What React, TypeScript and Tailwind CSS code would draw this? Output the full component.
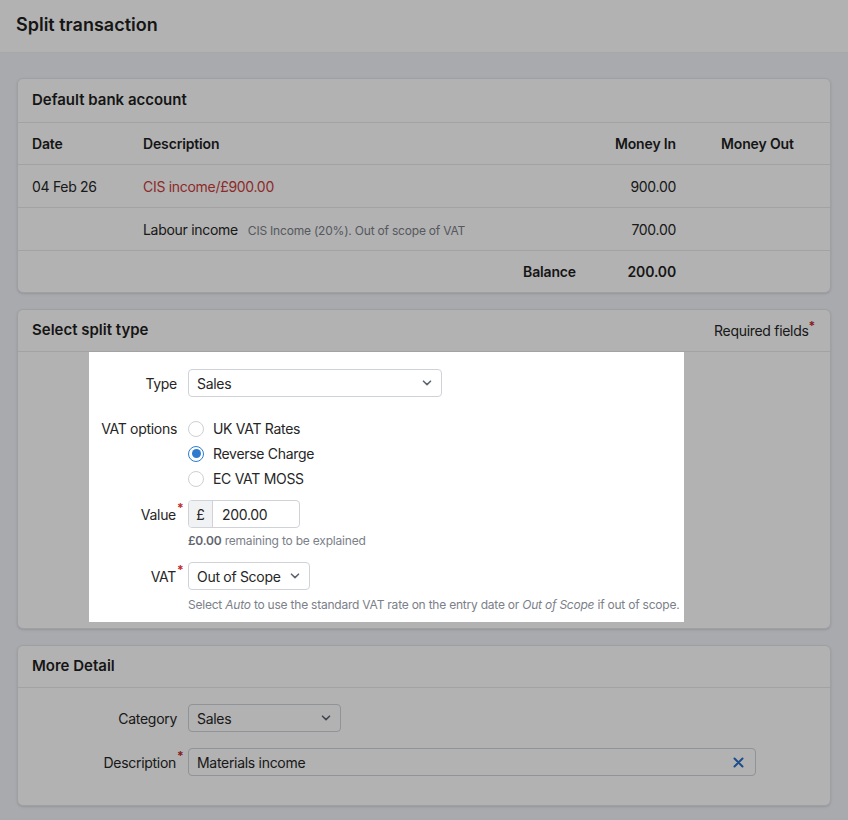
import React from "react";

const font = { fontFamily: "Inter, 'Noto Sans', 'Liberation Sans', sans-serif" };

function Chevron() {
  return (
    <svg width="10" height="6" viewBox="0 0 10 6" className="shrink-0">
      <path d="M1.5 1.2 L5 4.6 L8.5 1.2" fill="none" stroke="#5f6673" strokeWidth="1.6" strokeLinecap="round" strokeLinejoin="round" />
    </svg>
  );
}

function Select({ value, width }: { value: string; width: string }) {
  return (
    <div className={`flex h-[28px] items-center justify-between rounded-[4px] border border-[#cfd3d9] bg-white pl-[8px] pr-[9px] text-[14px] tracking-[-0.3px] text-[#262626] ${width}`}>
      <span>{value}</span>
      <Chevron />
    </div>
  );
}

function Radio({ label, checked }: { label: string; checked?: boolean }) {
  return (
    <div className="flex h-[25px] items-center gap-[9px]">
      {checked ? (
        <span className="flex h-[16px] w-[16px] items-center justify-center rounded-full border border-[#2f7bd0] bg-white">
          <span className="h-[9px] w-[9px] rounded-full bg-[#2f7bd0]" />
        </span>
      ) : (
        <span className="h-[16px] w-[16px] rounded-full border border-[#cdd0d5] bg-white" />
      )}
      <span className="text-[14px] tracking-[-0.3px] text-[#262626]">{label}</span>
    </div>
  );
}

function Label({ text, required }: { text: string; required?: boolean }) {
  return (
    <span className="relative text-[14px] tracking-[-0.3px] text-[#262626]">
      {text}
      {required && (
        <span className="absolute left-full top-[-5px] pl-[1px] text-[12px] font-bold text-[#c0282d]">*</span>
      )}
    </span>
  );
}

function CardHeader({ title, right }: { title: string; right?: React.ReactNode }) {
  return (
    <div className="flex h-[42px] items-center justify-between border-b border-[#e8e9ec] pl-[14px] pr-[15px]">
      <h2 className="text-[15px] font-semibold text-[#1f1f1f]">{title}</h2>
      {right}
    </div>
  );
}

export default function App() {
  return (
    <div className="relative min-h-screen bg-[#f2f4fa] text-[#262626]" style={font}>
      {/* Page header */}
      <div className="flex h-[53px] items-center border-b border-[#f0f0f0] bg-white pb-[4px] pl-[16px]">
        <h1 className="text-[18px] font-semibold text-[#1f1f1f]">Split transaction</h1>
      </div>

      <div className="flex flex-col gap-[16px] px-[17px] pb-[16px] pt-[25px]">
        {/* Bank account table */}
        <section className="overflow-hidden rounded-[6px] border border-[#e4e6ea] bg-white shadow-sm">
          <div className="flex h-[44px] items-center border-b border-[#e8e9ec] px-[14px]">
            <h2 className="text-[15px] font-semibold text-[#1f1f1f]">Default bank account</h2>
          </div>
          <div className="flex h-[42px] items-center border-b border-[#e8e9ec] pl-[14px] text-[14px] font-semibold tracking-[-0.15px] text-[#1f1f1f]">
            <div className="w-[111px]">Date</div>
            <div className="flex-1">Description</div>
            <div className="w-[100px] text-right">Money In</div>
            <div className="w-[154px] pl-[45px]">Money Out</div>
          </div>
          <div className="flex h-[43px] items-center border-b border-[#e8e9ec] pl-[14px] text-[14px] tracking-[-0.3px]">
            <div className="w-[111px]">04 Feb 26</div>
            <div className="flex-1 text-[#cc3b3b]">CIS income/£900.00</div>
            <div className="w-[100px] text-right">900.00</div>
            <div className="w-[154px]" />
          </div>
          <div className="flex h-[43px] items-center border-b border-[#e8e9ec] pl-[14px] text-[14px] tracking-[-0.3px]">
            <div className="w-[111px]" />
            <div className="flex flex-1 items-baseline gap-[10px]">
              <span>Labour income</span>
              <span className="text-[12px] tracking-[-0.2px] text-[#7b8089]">CIS Income (20%). Out of scope of VAT</span>
            </div>
            <div className="w-[100px] text-right">700.00</div>
            <div className="w-[154px]" />
          </div>
          <div className="flex h-[41px] items-center pl-[14px] text-[14px] font-semibold tracking-[-0.15px] text-[#1f1f1f]">
            <div className="w-[111px]" />
            <div className="flex-1 text-right">Balance</div>
            <div className="w-[100px] text-right">200.00</div>
            <div className="w-[154px]" />
          </div>
        </section>

        {/* Split type */}
        <section className="rounded-[6px] border border-[#e4e6ea] bg-white shadow-sm">
          <CardHeader
            title="Select split type"
            right={
              <span className="text-[14px] tracking-[-0.3px] text-[#262626]">
                Required fields<sup className="text-[12px] font-bold text-[#c0282d]">*</sup>
              </span>
            }
          />
          <div className="pb-[6px] pl-[71px]">
            <div className="relative z-20 grid w-[595px] grid-cols-[88px_1fr] items-start gap-x-[11px] bg-white pb-[9px] pt-[17px]">
              <div className="flex h-[28px] items-center justify-end">
                <Label text="Type" />
              </div>
              <Select value="Sales" width="w-[254px]" />

              <div className="mt-[19px] flex h-[25px] items-center justify-end">
                <Label text="VAT options" />
              </div>
              <div className="mt-[19px] flex flex-col">
                <Radio label="UK VAT Rates" />
                <Radio label="Reverse Charge" checked />
                <Radio label="EC VAT MOSS" />
              </div>

              <div className="mt-[9px] flex h-[28px] items-center justify-end pr-[1px]">
                <Label text="Value" required />
              </div>
              <div className="mt-[9px] flex flex-col">
                <div className="flex h-[28px] w-[112px] items-stretch overflow-hidden rounded-[4px] border border-[#cfd3d9] text-[14px] tracking-[-0.3px]">
                  <span className="flex w-[24px] items-center justify-center border-r border-[#cfd3d9] bg-[#f1f2f4]">£</span>
                  <span className="flex items-center pl-[9px]">200.00</span>
                </div>
                <p className="mt-[5px] text-[12px] leading-[16px] tracking-[-0.2px] text-[#7b8089]">
                  <span className="font-semibold text-[#5f6670]">£0.00</span> remaining to be explained
                </p>
              </div>

              <div className="mt-[13px] flex h-[28px] items-center justify-end pr-[1px]">
                <Label text="VAT" required />
              </div>
              <div className="mt-[13px] flex flex-col">
                <Select value="Out of Scope" width="w-[122px]" />
                <p className="mt-[7px] whitespace-nowrap text-[12px] leading-[16px] tracking-[-0.22px] text-[#7b8089]">
                  Select <i>Auto</i> to use the standard VAT rate on the entry date or <i>Out of Scope</i> if out of scope.
                </p>
              </div>
            </div>
          </div>
        </section>

        {/* Extra detail */}
        <section className="rounded-[6px] border border-[#e4e6ea] bg-white shadow-sm">
          <CardHeader title="More Detail" />
          <div className="grid grid-cols-[88px_1fr] items-center gap-x-[11px] gap-y-[16px] pb-[29px] pl-[71px] pt-[16px]">
            <div className="flex justify-end">
              <Label text="Category" />
            </div>
            <Select value="Sales" width="w-[153px]" />

            <div className="flex justify-end pr-[1px]">
              <Label text="Description" required />
            </div>
            <div className="flex h-[28px] w-[568px] items-center justify-between rounded-[4px] border border-[#cfd3d9] bg-white pl-[8px] pr-[11px] text-[14px] tracking-[-0.3px]">
              <span>Materials income</span>
              <svg width="11" height="11" viewBox="0 0 11 11">
                <path d="M1.5 1.5 L9.5 9.5 M9.5 1.5 L1.5 9.5" stroke="#2c6fc6" strokeWidth="2" strokeLinecap="round" />
              </svg>
            </div>
          </div>
        </section>
      </div>

      {/* Tour backdrop; the spotlit form block sits above it */}
      <div className="pointer-events-none absolute inset-0 z-10 bg-black/30" />
    </div>
  );
}
